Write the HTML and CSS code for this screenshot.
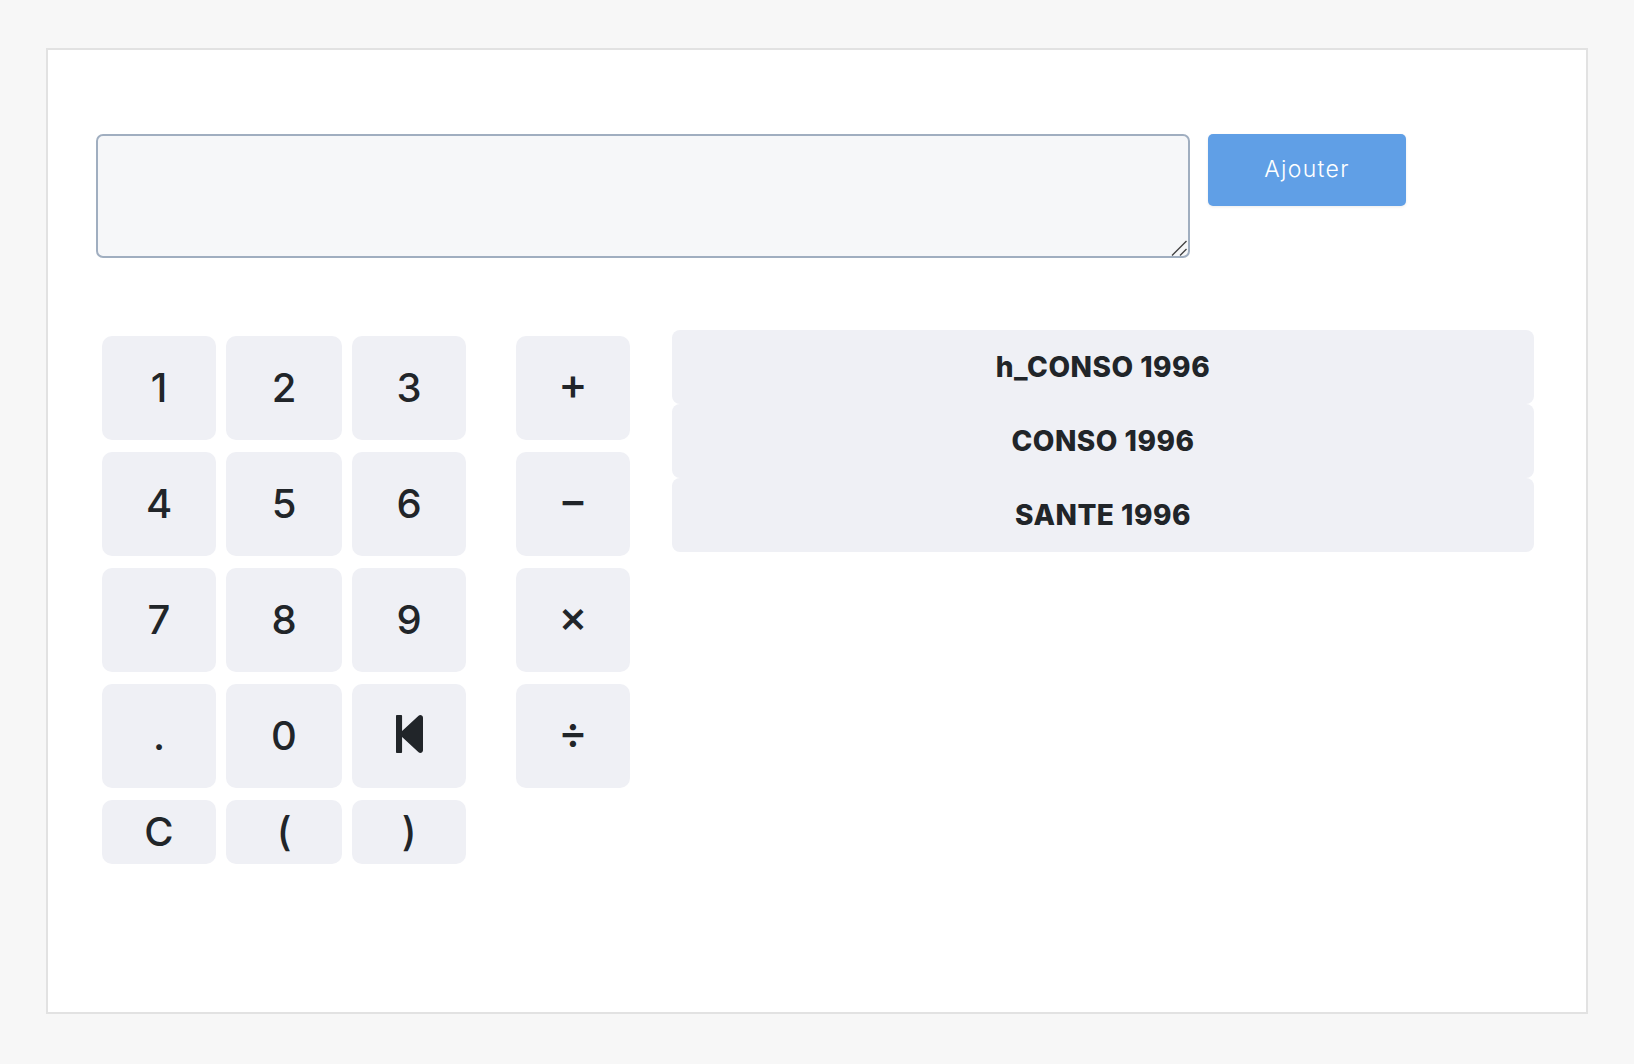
FILE: index.html
```html
<!DOCTYPE html>
<html lang="fr">
<head>
<meta charset="utf-8">
<title>Calculatrice</title>
<link rel="stylesheet" href="styles.css">
</head>
<body>
<main class="card">
  <div class="formula">
    <div class="formula-field">
      <textarea class="formula-input" aria-label="Formule"></textarea>
      <svg class="grip" viewBox="0 0 16 16" aria-hidden="true"><path d="M1 15.5 15.5 1M9 15.5 15.5 9"/></svg>
    </div>
    <button class="add-btn" type="button">Ajouter</button>
  </div>
  <div class="workspace">
    <div class="keypad">
      <button class="key" type="button">1</button>
      <button class="key" type="button">2</button>
      <button class="key" type="button">3</button>
      <button class="key" type="button">4</button>
      <button class="key" type="button">5</button>
      <button class="key" type="button">6</button>
      <button class="key" type="button">7</button>
      <button class="key" type="button">8</button>
      <button class="key" type="button">9</button>
      <button class="key" type="button">.</button>
      <button class="key" type="button">0</button>
      <button class="key" type="button" aria-label="Effacer">
        <svg class="icon-back" viewBox="64 32 320 448" aria-hidden="true"><path d="M64 468V44c0-6.6 5.4-12 12-12h48c6.6 0 12 5.4 12 12v176.4l195.5-181C352.1 22.3 384 36.6 384 64v384c0 27.4-31.9 41.7-52.5 24.6L136 292.7V468c0 6.6-5.4 12-12 12H76c-6.6 0-12-5.4-12-12z"/></svg>
      </button>
      <button class="key" type="button">C</button>
      <button class="key" type="button">(</button>
      <button class="key" type="button">)</button>
    </div>
    <div class="operators">
      <button class="key key-op" type="button">+</button>
      <button class="key key-op" type="button">−</button>
      <button class="key key-op" type="button">×</button>
      <button class="key key-op" type="button">÷</button>
    </div>
    <div class="variables">
      <button class="variable" type="button">h_CONSO 1996</button>
      <button class="variable" type="button">CONSO 1996</button>
      <button class="variable" type="button">SANTE 1996</button>
    </div>
  </div>
</main>
</body>
</html>
```
FILE: styles.css
```css
* { box-sizing: border-box; }

html, body { margin: 0; height: 100%; }

body {
  background: #f7f7f7;
  padding: 48px 46px 50px;
  font-family: Inter, "Liberation Sans", sans-serif;
  color: #212529;
}

.card {
  height: 966px;
  background: #fff;
  border: 2px solid #e2e2e2;
  padding: 84px 48px 0;
}

.formula {
  display: flex;
  align-items: flex-start;
  gap: 18px;
}

.formula-field {
  position: relative;
  width: 1094px;
  height: 124px;
}

.formula-input {
  display: block;
  width: 100%;
  height: 100%;
  margin: 0;
  padding: 8px 12px;
  background: #f6f7f9;
  border: 2px solid #a0aec0;
  border-radius: 7px;
  outline: none;
  resize: none;
}

.grip {
  position: absolute;
  right: 3px;
  bottom: 2px;
  width: 16px;
  height: 16px;
  pointer-events: none;
  fill: none;
  stroke: #444;
  stroke-width: 1.4;
}

.add-btn {
  width: 198px;
  height: 72px;
  padding: 0 0 2px;
  background: #609fe6;
  color: #fff;
  border: 0;
  border-radius: 5px;
  box-shadow: 0 1px 3px rgba(0, 0, 0, 0.08);
  font-family: Inter, sans-serif;
  font-size: 23px;
  font-weight: 300;
  letter-spacing: 1.3px;
}

.workspace {
  display: flex;
  align-items: flex-start;
  margin-top: 72px;
  padding-left: 6px;
}

.keypad {
  display: grid;
  grid-template-columns: 114px 116px 114px;
  grid-template-rows: repeat(4, 104px) 64px;
  column-gap: 10px;
  row-gap: 12px;
  margin-top: 6px;
}

.operators {
  display: grid;
  grid-template-columns: 114px;
  grid-template-rows: repeat(4, 104px);
  row-gap: 12px;
  margin: 6px 42px 0 50px;
}

.key {
  display: flex;
  align-items: center;
  justify-content: center;
  padding: 0 0 2px;
  background: #eff0f5;
  color: #212529;
  border: 0;
  border-radius: 10px;
  font-family: Inter, sans-serif;
  font-size: 40px;
  font-weight: 450;
}

.key-op {
  padding-bottom: 8px;
  font-size: 44px;
  font-weight: 450;
}

.icon-back {
  width: 27px;
  height: 38px;
  margin-bottom: 2px;
  fill: #212529;
}

.variables {
  display: flex;
  flex-direction: column;
  width: 862px;
}

.variable {
  height: 74px;
  padding: 0;
  background: #eff0f5;
  color: #212529;
  border: 0;
  border-radius: 8px;
  font-family: Inter, sans-serif;
  font-size: 28px;
  font-weight: 800;
  letter-spacing: 0.5px;
}
```
